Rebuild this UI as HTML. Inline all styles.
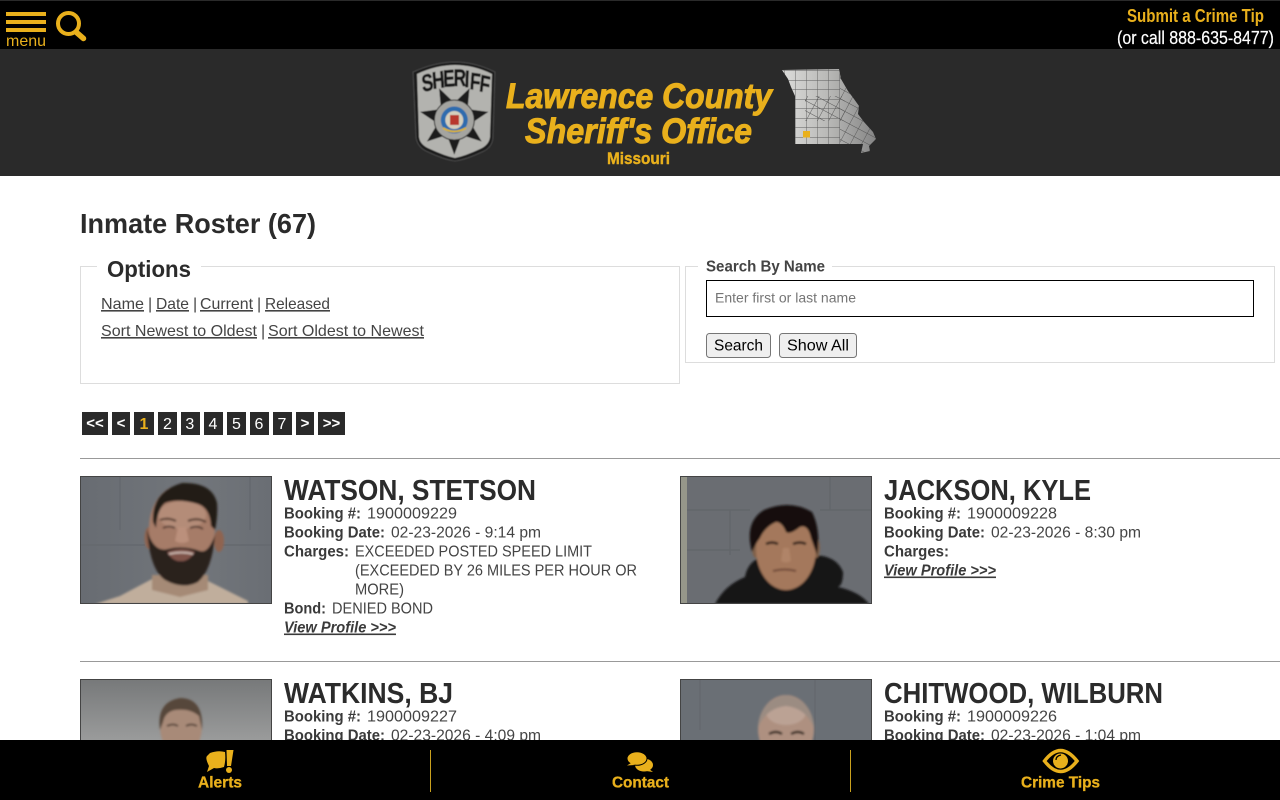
<!DOCTYPE html>
<html lang="en">
<head>
<meta charset="utf-8">
<title>Inmate Roster - Lawrence County Sheriff's Office</title>
<style>
html,body{margin:0;padding:0;width:1280px;height:800px;overflow:hidden;background:#fff}
svg{display:block;position:absolute;left:0;top:0}
text{font-family:"Liberation Sans",sans-serif;white-space:pre}
.b{font-weight:700}
.g{fill:#e9b01c}
.t{font-size:16px;fill:#444}
.l{font-size:16px;fill:#3a3a3a;font-weight:700}
.n{font-size:29px;font-weight:700;fill:#2b2b2b}
.u{text-decoration:underline}
.p{font-size:16px;fill:#fff;text-anchor:middle}
.q{font-size:15px;font-weight:700}
</style>
</head>
<body>
<svg width="1280" height="800" viewBox="0 0 1280 800" xmlns="http://www.w3.org/2000/svg">
<defs>
<filter id="s" x="-10%" y="-10%" width="120%" height="120%"><feGaussianBlur stdDeviation="1"/></filter>
<filter id="s3" x="-20%" y="-20%" width="140%" height="140%"><feGaussianBlur stdDeviation="2.5"/></filter>
<filter id="s2" x="-10%" y="-10%" width="120%" height="120%"><feGaussianBlur stdDeviation="0.4"/></filter>
<linearGradient id="mapg" x1="0" x2="1" y1="0" y2="0"><stop offset="0" stop-color="#dcdcda"/><stop offset=".5" stop-color="#b8b8b6"/><stop offset="1" stop-color="#858585"/></linearGradient>
<linearGradient id="bg3" x1="0" x2="0" y1="0" y2="1"><stop offset="0" stop-color="#77797a"/><stop offset="1" stop-color="#9a9b9b"/></linearGradient>
<linearGradient id="bg1" x1="0" x2="1" y1="0" y2="0"><stop offset="0" stop-color="#686c72"/><stop offset=".6" stop-color="#72767b"/><stop offset="1" stop-color="#6a6e74"/></linearGradient>
<pattern id="cty" width="11" height="9.500" patternUnits="userSpaceOnUse" x="785" y="71"><path d="M11 0V9.500M0 9.500H11" fill="none" stroke="#5c5c5c" stroke-width=".9"/></pattern>
<pattern id="cty2" width="10" height="9" patternUnits="userSpaceOnUse" patternTransform="rotate(28 840 100)" x="830" y="90"><path d="M10 0V9M0 9H10" fill="none" stroke="#555" stroke-width=".9"/></pattern>
<clipPath id="c1"><rect x="81" y="477" width="190" height="126"/></clipPath>
<clipPath id="c2"><rect x="681" y="477" width="190" height="126"/></clipPath>
<clipPath id="c3"><rect x="81" y="680" width="190" height="60"/></clipPath>
<clipPath id="c4"><rect x="681" y="680" width="190" height="60"/></clipPath>
<clipPath id="mo"><path d="M782 70L839 69 841 79 848 91 854 99 859 106 858 114 864 122 873 132 876 139 869 146 870 151 861 153 863 144H795V96L791 87 788 79Z"/></clipPath>
</defs>

<!-- top bar -->
<rect width="1280" height="49" fill="#000"/>
<rect width="1280" height="1" fill="#2a2a2a"/>
<rect x="6" y="12" width="40" height="4" class="g"/>
<rect x="6" y="20" width="40" height="4" class="g"/>
<rect x="6" y="28" width="40" height="4" class="g"/>
<text x="6" y="46" font-size="16" class="g" textLength="40" lengthAdjust="spacingAndGlyphs">menu</text>
<circle cx="68.500" cy="23.500" r="10.500" fill="none" stroke="#e9b01c" stroke-width="4"/>
<path d="M76 32L83.500 38.500" stroke="#e9b01c" stroke-width="5.500" stroke-linecap="round"/>
<text x="1127" y="22" font-size="18" class="b g" textLength="137" lengthAdjust="spacingAndGlyphs">Submit a Crime Tip</text>
<text x="1117" y="44" font-size="18" fill="#fff" textLength="157" lengthAdjust="spacingAndGlyphs" stroke="#fff" stroke-width=".2">(or call 888-635-8477)</text>

<!-- banner -->
<rect y="49" width="1280" height="127" fill="#2a2a2a"/>
<!-- badge -->
<g filter="url(#s2)">
<path d="M413 72Q435 62 455 62 475 62 495 72L493 138Q492 148 482 152 465 160 455 161 445 160 428 152 418 148 416 138Z" fill="#1c1c1c" stroke="#4a4a4a" stroke-width="1"/>
<path d="M417 74Q436 65 455 65 474 65 492 74L490 137Q489 145 480 149 465 156 455 158 445 156 430 149 420 145 419 137Z" fill="#b3b3af"/>
<g transform="scale(.72 1)" font-size="24" font-weight="700" fill="#181818" stroke="#181818" stroke-width=".5">
<text x="587" y="92" rotate="-9">S</text>
<text x="601" y="89" rotate="-6">H</text>
<text x="616" y="87" rotate="-3">E</text>
<text x="630" y="86" rotate="0">R</text>
<text x="645" y="87" rotate="3">I</text>
<text x="652" y="89" rotate="6">F</text>
<text x="665" y="91" rotate="9">F</text>
</g>
<path d="M454.300 154.700 461.700 135 481.700 141.500 470.900 123.500 488.400 111.900 467.600 109.100 469.500 88.200 454.300 102.700 439.100 88.200 441 109.100 420.200 111.900 437.700 123.500 426.900 141.500 446.900 135Z" fill="#1c1c1c"/>
<circle cx="454.300" cy="120" r="20" fill="#a4a4a0" stroke="#2a2a2a" stroke-width="1"/>
<circle cx="454.300" cy="120" r="13.500" fill="#2f6cae"/>
<circle cx="454.300" cy="120" r="9" fill="#d4cfbd"/>
<rect x="450" y="115" width="9" height="10" fill="#b8372e"/>
<path d="M443 128Q454 135 466 128" fill="none" stroke="#d8b23a" stroke-width="2"/>
</g>

<text x="506" y="108" font-size="35" font-weight="700" font-style="italic" class="g" textLength="266" lengthAdjust="spacingAndGlyphs" stroke="#e9b01c" stroke-width="1">Lawrence County</text>
<text x="525" y="143" font-size="35" font-weight="700" font-style="italic" class="g" textLength="227" lengthAdjust="spacingAndGlyphs" stroke="#e9b01c" stroke-width="1">Sheriff's Office</text>
<text x="607" y="164" font-size="17" class="b g" textLength="63" lengthAdjust="spacingAndGlyphs" stroke="#e9b01c" stroke-width=".4">Missouri</text>
<!-- map -->
<path d="M782 70L839 69 841 79 848 91 854 99 859 106 858 114 864 122 873 132 876 139 869 146 870 151 861 153 863 144H795V96L791 87 788 79Z" fill="url(#mapg)"/>
<g clip-path="url(#mo)">
<rect x="780" y="66" width="60" height="90" fill="url(#cty)"/>
<rect x="840" y="66" width="40" height="90" fill="url(#cty2)"/>
<rect x="805" y="96" width="40" height="25" fill="url(#cty2)"/>
</g>
<rect x="803" y="131" width="7" height="6.500" fill="#e9b01c"/>

<!-- heading -->
<text x="80" y="233" font-size="28" class="b" fill="#2b2b2b" textLength="236" lengthAdjust="spacingAndGlyphs">Inmate Roster (67)</text>

<!-- options -->
<rect x="80.500" y="266.500" width="599" height="117" fill="none" stroke="#ddd"/>
<rect x="97" y="260" width="104" height="12" fill="#fff"/>
<text x="107" y="277" font-size="23" class="b" fill="#2b2b2b" textLength="84" lengthAdjust="spacingAndGlyphs">Options</text>
<text x="101" y="309" class="t u" textLength="43" lengthAdjust="spacingAndGlyphs">Name</text>
<text x="148" y="309" class="t">|</text>
<text x="156" y="309" class="t u" textLength="33" lengthAdjust="spacingAndGlyphs">Date</text>
<text x="193" y="309" class="t">|</text>
<text x="200" y="309" class="t u" textLength="53" lengthAdjust="spacingAndGlyphs">Current</text>
<text x="257" y="309" class="t">|</text>
<text x="265" y="309" class="t u" textLength="65" lengthAdjust="spacingAndGlyphs">Released</text>
<text x="101" y="336" class="t u" textLength="156" lengthAdjust="spacingAndGlyphs">Sort Newest to Oldest</text>
<text x="261" y="336" class="t">|</text>
<text x="268" y="336" class="t u" textLength="156" lengthAdjust="spacingAndGlyphs">Sort Oldest to Newest</text>

<!-- search -->
<rect x="685.500" y="266.500" width="589" height="96" fill="none" stroke="#ddd"/>
<rect x="698" y="260" width="134" height="12" fill="#fff"/>
<text x="706" y="271.500" class="l" style="fill:#444" textLength="119" lengthAdjust="spacingAndGlyphs">Search By Name</text>
<rect x="706.500" y="280.500" width="547" height="36" fill="#fff" stroke="#000" stroke-width="1"/>
<text x="715" y="302.500" font-size="14" fill="#757575" textLength="141" lengthAdjust="spacingAndGlyphs">Enter first or last name</text>
<rect x="706.500" y="333.500" width="64" height="24" rx="3" fill="#efefef" stroke="#767676"/>
<text x="714" y="350.500" font-size="16" fill="#000" textLength="49" lengthAdjust="spacingAndGlyphs">Search</text>
<rect x="779.500" y="333.500" width="77" height="24" rx="3" fill="#efefef" stroke="#767676"/>
<text x="787" y="350.500" font-size="16" fill="#000" textLength="62" lengthAdjust="spacingAndGlyphs">Show All</text>

<!-- pagination -->
<g fill="#2a2a2a">
<rect x="82" y="412" width="26" height="23"/><rect x="112" y="412" width="18" height="23"/>
<rect x="134" y="412" width="20" height="23"/><rect x="158" y="412" width="19" height="23"/>
<rect x="181" y="412" width="19" height="23"/><rect x="204" y="412" width="19" height="23"/>
<rect x="227" y="412" width="19" height="23"/><rect x="250" y="412" width="19" height="23"/>
<rect x="273" y="412" width="19" height="23"/><rect x="296" y="412" width="18" height="23"/>
<rect x="318" y="412" width="27" height="23"/>
</g>
<text x="95" y="428" class="p q">&lt;&lt;</text>
<text x="121" y="428" class="p q">&lt;</text>
<text x="144" y="429" class="p b" style="fill:#e9b01c">1</text>
<text x="167.500" y="429" class="p">2</text>
<text x="189.800" y="429" class="p">3</text>
<text x="213" y="429" class="p">4</text>
<text x="236.500" y="429" class="p">5</text>
<text x="259" y="429" class="p">6</text>
<text x="282" y="429" class="p">7</text>
<text x="305" y="428" class="p q">&gt;</text>
<text x="331.500" y="428" class="p q">&gt;&gt;</text>

<rect x="80" y="458" width="1200" height="1" fill="#999"/>
<rect x="80" y="661" width="1200" height="1" fill="#999"/>

<!-- card 1 -->
<rect x="80.500" y="476.500" width="191" height="127" fill="#444" stroke="#444"/>
<g clip-path="url(#c1)">
<rect x="81" y="477" width="190" height="126" fill="url(#bg1)"/>
<path d="M120 477V530M250 477V530M81 545H145M222 545H271" stroke="#65696e" stroke-width="1.500" fill="none"/>
<g filter="url(#s)">
<path d="M95 604L120 596 152 579 208 581 248 601V604Z" fill="#c0ae9c"/>
<path d="M152 575L152 590 180 597 208 590 208 575Z" fill="#a58a76"/>
<ellipse cx="149" cy="538" rx="4.500" ry="11" fill="#8f6450"/>
<ellipse cx="219" cy="541" rx="5" ry="11" fill="#8f6450"/>
<ellipse cx="182" cy="528" rx="33" ry="43" fill="#a67c68"/>
<ellipse cx="182" cy="515" rx="24" ry="14" fill="#b48c78"/>
<path d="M153 522Q151 492 182 483 212 482 217 503 218 515 215 530L211 526Q210 508 198 504 178 498 165 503 157 510 156 528Z" fill="#241c19"/>
<path d="M147 530Q150 570 165 580 183 590 198 582 212 570 215 535 208 554 200 551 183 545 168 549 154 553 147 530Z" fill="#2a211d"/>
<path d="M167 552Q182 546 195 552 188 562 181 561 173 562 167 552Z" fill="#7f5248"/>
<path d="M169 554Q182 551 193 554" stroke="#d8c8c0" stroke-width="1.600" fill="none"/>
<path d="M160 520Q168 517 176 521M188 521Q197 517 206 522" stroke="#4e352a" stroke-width="2" fill="none"/>
<path d="M163 528Q169 525 175 528M190 528Q197 525 203 529" stroke="#3a2620" stroke-width="1.600" fill="none"/>
<path d="M178 527L175 541Q182 545 189 541L186 527Z" fill="#bb907c"/>
</g>
</g>
<text x="284" y="500" class="n" textLength="252" lengthAdjust="spacingAndGlyphs">WATSON, STETSON</text>
<text x="284" y="518.500" class="l" textLength="77" lengthAdjust="spacingAndGlyphs">Booking #:</text>
<text x="367" y="518.500" class="t" textLength="90" lengthAdjust="spacingAndGlyphs">1900009229</text>
<text x="284" y="537.500" class="l" textLength="101" lengthAdjust="spacingAndGlyphs">Booking Date:</text>
<text x="391" y="537.500" class="t" textLength="150" lengthAdjust="spacingAndGlyphs">02-23-2026 - 9:14 pm</text>
<text x="284" y="556.500" class="l" textLength="65" lengthAdjust="spacingAndGlyphs">Charges:</text>
<text x="355" y="556.500" class="t" textLength="237" lengthAdjust="spacingAndGlyphs">EXCEEDED POSTED SPEED LIMIT</text>
<text x="355" y="575.500" class="t" textLength="282" lengthAdjust="spacingAndGlyphs">(EXCEEDED BY 26 MILES PER HOUR OR</text>
<text x="355" y="594.500" class="t" textLength="49" lengthAdjust="spacingAndGlyphs">MORE)</text>
<text x="284" y="613.500" class="l" textLength="42" lengthAdjust="spacingAndGlyphs">Bond:</text>
<text x="332" y="613.500" class="t" textLength="101" lengthAdjust="spacingAndGlyphs">DENIED BOND</text>
<text x="284" y="632.500" class="l u" font-style="italic" textLength="112" lengthAdjust="spacingAndGlyphs">View Profile &gt;&gt;&gt;</text>

<!-- card 2 -->
<rect x="680.500" y="476.500" width="191" height="127" fill="#444" stroke="#444"/>
<g clip-path="url(#c2)">
<rect x="681" y="477" width="190" height="126" fill="#6a6d72"/>
<rect x="681" y="477" width="6" height="126" fill="#96978a"/>
<path d="M687 510H750M820 510H871M730 510V555M830 477V510M687 550H740" stroke="#62656a" stroke-width="1.200" fill="none"/>
<g filter="url(#s)">
<path d="M715 604Q725 585 745 577 748 560 765 556H805Q835 552 843 572 843 585 838 587 860 592 869 604Z" fill="#131215"/>
<ellipse cx="756" cy="548" rx="4" ry="10" fill="#80604a"/><ellipse cx="816" cy="548" rx="4" ry="10" fill="#80604a"/>
<ellipse cx="786" cy="549" rx="30" ry="41" fill="#a4785c"/>
<path d="M752 552Q744 522 764 510 790 499 812 512 821 530 817 555L811 538Q808 524 800 527 790 535 786 532 782 522 776 522 765 527 760 538 756 543 752 552Z" fill="#15110e"/>
<path d="M766 544Q772 541 778 544M793 544Q800 541 806 544" stroke="#2b1c14" stroke-width="2.400" fill="none"/>
<path d="M783 548L781 561Q786 564 791 561L789 548Z" fill="#b08468"/>
<path d="M773 571Q785 568 796 571" stroke="#6e4738" stroke-width="2" fill="none"/>
</g>
</g>
<text x="884" y="500" class="n" textLength="207" lengthAdjust="spacingAndGlyphs">JACKSON, KYLE</text>
<text x="884" y="518.500" class="l" textLength="77" lengthAdjust="spacingAndGlyphs">Booking #:</text>
<text x="967" y="518.500" class="t" textLength="90" lengthAdjust="spacingAndGlyphs">1900009228</text>
<text x="884" y="537.500" class="l" textLength="101" lengthAdjust="spacingAndGlyphs">Booking Date:</text>
<text x="991" y="537.500" class="t" textLength="150" lengthAdjust="spacingAndGlyphs">02-23-2026 - 8:30 pm</text>
<text x="884" y="556.500" class="l" textLength="65" lengthAdjust="spacingAndGlyphs">Charges:</text>
<text x="884" y="575.500" class="l u" font-style="italic" textLength="112" lengthAdjust="spacingAndGlyphs">View Profile &gt;&gt;&gt;</text>

<!-- card 3 -->
<rect x="80.500" y="679.500" width="191" height="70" fill="#444" stroke="#444"/>
<g clip-path="url(#c3)">
<rect x="81" y="680" width="190" height="60" fill="url(#bg3)"/>
<g filter="url(#s)">
<ellipse cx="181" cy="727" rx="21" ry="28" fill="#a88a78"/>
<path d="M160 730Q156 702 180 698 204 698 202 730L199 716Q190 708 175 710 165 712 163 722Z" fill="#57473a"/>
<path d="M167 726Q173 723 178 726M186 726Q191 723 197 726" stroke="#4b3a30" stroke-width="1.800" fill="none"/>
</g>
</g>
<text x="284" y="703" class="n" textLength="169" lengthAdjust="spacingAndGlyphs">WATKINS, BJ</text>
<text x="284" y="721.500" class="l" textLength="77" lengthAdjust="spacingAndGlyphs">Booking #:</text>
<text x="367" y="721.500" class="t" textLength="90" lengthAdjust="spacingAndGlyphs">1900009227</text>
<text x="284" y="740.500" class="l" textLength="101" lengthAdjust="spacingAndGlyphs">Booking Date:</text>
<text x="391" y="740.500" class="t" textLength="150" lengthAdjust="spacingAndGlyphs">02-23-2026 - 4:09 pm</text>

<!-- card 4 -->
<rect x="680.500" y="679.500" width="191" height="70" fill="#444" stroke="#444"/>
<g clip-path="url(#c4)">
<rect x="681" y="680" width="190" height="60" fill="#6a6f75"/>
<path d="M700 680V730M815 680V740" stroke="#64686e" stroke-width="1.500" fill="none"/>
<g filter="url(#s)">
<ellipse cx="786" cy="729" rx="28" ry="34" fill="#ae9080"/>
<ellipse cx="786" cy="712" rx="20" ry="13" fill="#bba294"/>
<path d="M758 728Q760 700 786 695 812 700 814 728 806 708 786 706 766 708 758 728Z" fill="#9b8c82"/>
<path d="M769 734Q776 730 782 734M791 734Q798 730 804 734" stroke="#33261f" stroke-width="2.400" fill="none"/>
</g>
</g>
<text x="884" y="703" class="n" textLength="279" lengthAdjust="spacingAndGlyphs">CHITWOOD, WILBURN</text>
<text x="884" y="721.500" class="l" textLength="77" lengthAdjust="spacingAndGlyphs">Booking #:</text>
<text x="967" y="721.500" class="t" textLength="90" lengthAdjust="spacingAndGlyphs">1900009226</text>
<text x="884" y="740.500" class="l" textLength="101" lengthAdjust="spacingAndGlyphs">Booking Date:</text>
<text x="991" y="740.500" class="t" textLength="150" lengthAdjust="spacingAndGlyphs">02-23-2026 - 1:04 pm</text>

<!-- bottom bar -->
<rect y="740" width="1280" height="60" fill="#000"/>
<rect x="430" y="750" width="1" height="42" fill="#c9a01e"/>
<rect x="850" y="750" width="1" height="42" fill="#c9a01e"/>
<!-- alerts icon -->
<path d="M210 753Q218 750 225 752 226 760 224 767 218 769 214 768L207 772 209 766Q205 758 207 756Z" fill="#e9b01c"/>
<path d="M226.500 750H233.500L231 766H227Z" fill="#e9b01c"/>
<circle cx="229" cy="770" r="3" fill="#e9b01c"/>
<text x="198" y="787.500" font-size="16" class="b g" textLength="44" lengthAdjust="spacingAndGlyphs" stroke="#e9b01c" stroke-width=".3">Alerts</text>
<!-- contact icon -->
<ellipse cx="644" cy="765" rx="9" ry="6.500" fill="#e9b01c"/>
<path d="M649 769L653 772 646 771Z" fill="#e9b01c"/>
<ellipse cx="637" cy="758.500" rx="10" ry="6.800" fill="#e9b01c" stroke="#000" stroke-width="1"/>
<path d="M631 763L627 765.500 635 765Z" fill="#e9b01c"/>
<text x="612" y="787.500" font-size="16" class="b g" textLength="57" lengthAdjust="spacingAndGlyphs" stroke="#e9b01c" stroke-width=".3">Contact</text>
<!-- eye icon -->
<path d="M1044.500 761Q1060.500 740 1077 761 1060.500 782 1044.500 761Z" fill="none" stroke="#e9b01c" stroke-width="3.500"/>
<circle cx="1060.500" cy="761" r="7.500" fill="#e9b01c"/>
<path d="M1056 760Q1056 756 1061 755" stroke="#000" stroke-width="1.300" fill="none"/>
<text x="1021" y="787.500" font-size="16" class="b g" textLength="79" lengthAdjust="spacingAndGlyphs" stroke="#e9b01c" stroke-width=".3">Crime Tips</text>
</svg>
</body>
</html>
